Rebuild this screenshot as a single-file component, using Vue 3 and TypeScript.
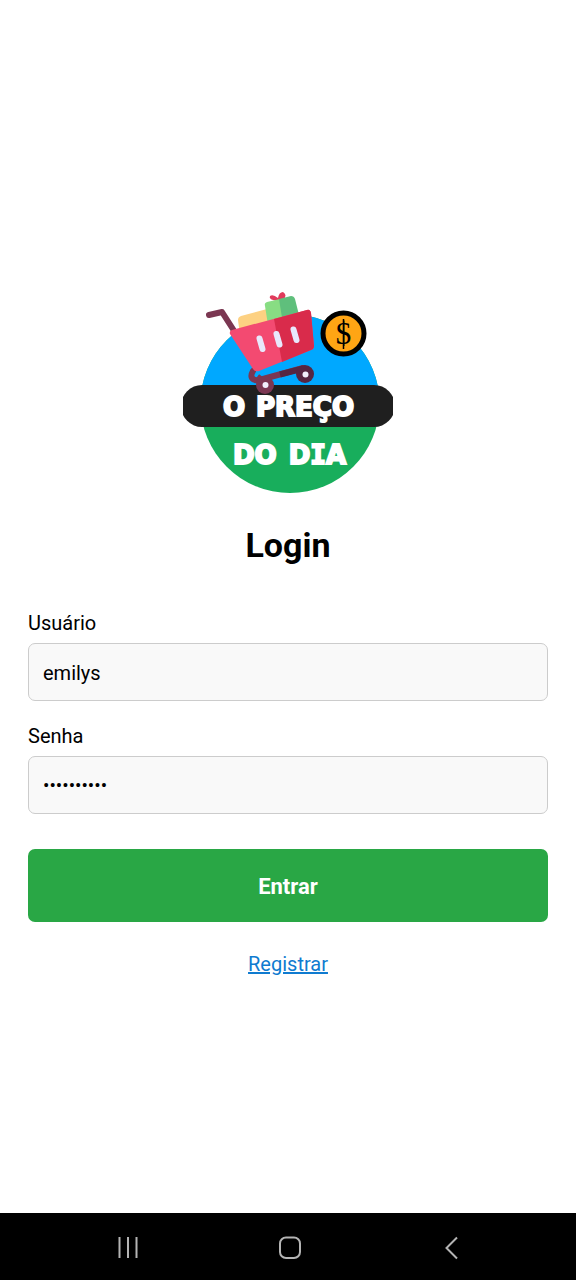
<script setup lang="ts">
import { ref } from 'vue'

const username = ref<string>('emilys')
const password = ref<string>('emilyspass')

function submit(): void {
  username.value = username.value.trim()
}
</script>

<template>
  <div class="screen">
    <main class="content">
      <svg class="logo" viewBox="0 0 210 210" role="img" aria-label="O Preço do Dia">
        <circle cx="107" cy="119.500" r="89.500" fill="#18ae5c" />
        <path d="M17.500 119.500a89.500 89.500 0 0 1 179 0z" fill="#00a8ff" />
        <rect x="-2" y="101" width="214" height="42" rx="21" fill="#1f1f1f" />

        <path d="M26 31l13-3 16 25" fill="none" stroke="#7b3752" stroke-width="6" stroke-linecap="round" stroke-linejoin="round" />
        <path d="M58 32l26-7 4 20-31 6-2-15q0-3 3-4z" fill="#fdd182" />
        <path d="M95 17q-10-1-8-5 3-2 8 2 1-6 5-6 5 3 0 8z" fill="#e03b5c" />
        <path d="M82 22q-1-3 2-4l13-3 5 22-17 4z" fill="#88dd83" />
        <path d="M96 15l12-3q3 0 4 3l5 20-17 5z" fill="#5fbf7c" />
        <path d="M70 87q-4 7 2 9 4 1 8-1l40-11" fill="none" stroke="#7b3752" stroke-width="6" stroke-linecap="round" stroke-linejoin="round" />
        <path d="M74 93l8 6" stroke="#7b3752" stroke-width="7" />
        <path d="M97 90.500l23-6" stroke="#562642" stroke-width="6" />
        <path d="M47 50q-1-3 2-4l75-20q3-1 4 3l3 33q0 3-3 4l-52 21q-4 1-6-2z" fill="#f34a71" />
        <path d="M91 35l33-9q3-1 4 3l3 33q0 3-3 4l-29 12z" fill="#d92b4b" />
        <path d="M76.500 54.500l3 10.500M93.500 50l3 10.500M110.500 45.500l3 10.500" stroke="#e8e8fc" stroke-width="6" stroke-linecap="round" />
        <circle cx="122" cy="90" r="9" fill="#562642" />
        <circle cx="122.500" cy="90.500" r="3" fill="#f1effc" />
        <circle cx="82" cy="101" r="9" fill="#7b3752" />
        <circle cx="82.500" cy="101" r="3" fill="#f1effc" />

        <circle cx="160.500" cy="49.500" r="20.500" fill="#ffa514" stroke="#000" stroke-width="5" />
        <text class="coin" x="160.500" y="60">$</text>
        <path d="M160.500 35v30" stroke="#000" stroke-width="1.500" />

        <g class="brand">
          <text x="40" y="132">O</text>
          <text x="171" y="132" text-anchor="end">PREÇO</text>
          <text x="50" y="180">DO</text>
          <text x="163" y="180" text-anchor="end">D<tspan class="slab">I</tspan>A</text>
        </g>
      </svg>

      <h1>Login</h1>

      <form @submit.prevent="submit">
        <label for="username">Usuário</label>
        <input id="username" v-model="username" type="text" autocomplete="username" />
        <label for="password">Senha</label>
        <input id="password" v-model="password" type="password" autocomplete="current-password" />
        <button class="enter" type="submit">Entrar</button>
      </form>

      <a class="register" href="#registrar">Registrar</a>
    </main>

    <nav class="system-bar" aria-label="Sistema">
      <button type="button" aria-label="Recentes">
        <svg viewBox="0 0 24 24"><path d="M4.500 1v21M13 1v21M21.500 1v21" /></svg>
      </button>
      <button type="button" aria-label="Início">
        <svg viewBox="0 0 24 24"><rect x="3" y="1.500" width="20" height="20.500" rx="6" /></svg>
      </button>
      <button type="button" aria-label="Voltar">
        <svg viewBox="0 0 24 24"><path d="M17 1.500L6.500 12l10.500 10.500" /></svg>
      </button>
    </nav>
  </div>
</template>

<style>
body {
  margin: 0;
}
</style>

<style scoped>
.screen {
  display: flex;
  flex-direction: column;
  min-height: 100vh;
  background: #fff;
  color: #000;
  font-family: Roboto, "Liberation Sans", sans-serif;
}

.content {
  flex: 1;
  display: flex;
  flex-direction: column;
  align-items: center;
  padding: 284px 28px 28px;
}

.logo {
  display: block;
  width: 210px;
  height: 210px;
}

.brand {
  fill: #fff;
  stroke: #fff;
  stroke-width: 2px;
  font: bold 26px "DejaVu Sans", sans-serif;
}

.slab {
  font-family: "DejaVu Sans Mono", monospace;
}

.coin {
  font: 31px "Liberation Serif", serif;
  text-anchor: middle;
}

h1 {
  margin: 31px 0 45px;
  font-size: 34px;
  line-height: 40px;
  font-weight: 700;
}

form {
  display: flex;
  flex-direction: column;
  width: 100%;
}

label {
  margin-bottom: 7px;
  font-size: 20px;
  line-height: 26px;
}

input {
  box-sizing: border-box;
  width: 100%;
  height: 58px;
  margin: 0 0 22px;
  padding: 2px 14px 0;
  border: 1px solid #ccc;
  border-radius: 7px;
  outline: none;
  background: #f9f9f9;
  color: #000;
  font: 20px Roboto, "Liberation Sans", sans-serif;
}

input[type="password"] {
  padding-top: 0;
  font-size: 19px;
}

.enter {
  height: 73px;
  margin: 13px 0 0;
  padding: 2px 0 0;
  border: 0;
  border-radius: 7px;
  background: #29a745;
  color: #fff;
  font: 700 22px Roboto, "Liberation Sans", sans-serif;
}

.register {
  margin-top: 29px;
  color: #0f7bd0;
  font-size: 20px;
  line-height: 26px;
}

.system-bar {
  box-sizing: border-box;
  display: flex;
  justify-content: space-between;
  align-items: center;
  height: 67px;
  padding: 2px 19.5% 0 20%;
  background: #000;
}

.system-bar button {
  display: flex;
  padding: 0;
  border: 0;
  background: none;
}

.system-bar svg {
  width: 24px;
  height: 24px;
  fill: none;
  stroke: #b4b4b4;
  stroke-width: 2px;
}
</style>
